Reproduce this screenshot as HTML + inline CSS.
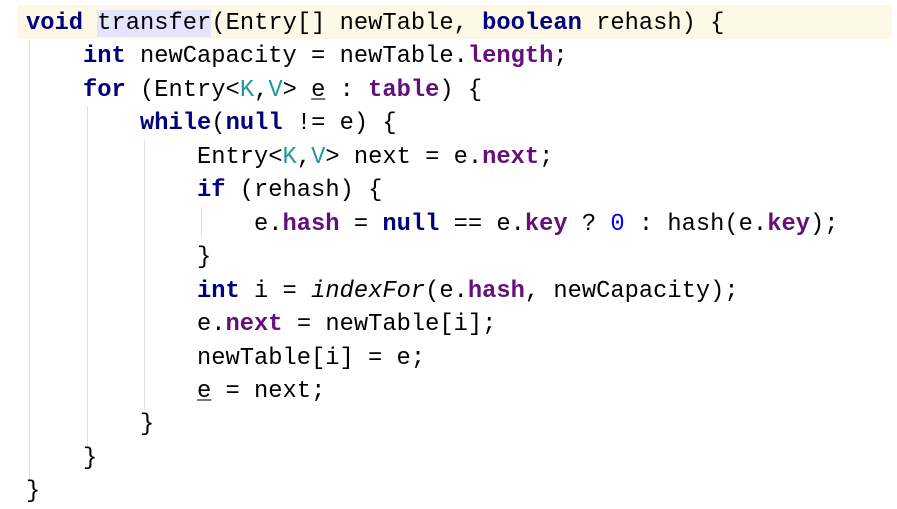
<!DOCTYPE html>
<html><head><style>
body{margin:0;background:#fff;width:897px;height:502px;overflow:hidden;position:relative}
.hl{position:absolute;left:18px;top:5px;width:874px;height:34px;background:#fcfae6}
.g{position:absolute;width:1px;background:#e0e0e0}
pre{position:absolute;left:26px;top:7px;margin:0;font-family:"Liberation Mono",monospace;font-size:23.75px;line-height:33.45px;color:#000}
.k{color:#000080;font-weight:bold}
.f{color:#660e7a;font-weight:bold}
.t{color:#20999d}
.n{color:#0000ff}
.s{background:#e4e4ff}
.u{text-decoration:underline;text-decoration-color:#777}
i{font-style:italic}
</style></head><body>
<div class="hl"></div>
<div class="g" style="left:29px;top:40px;height:440px"></div>
<div class="g" style="left:87px;top:106px;height:340px"></div>
<div class="g" style="left:144px;top:140px;height:270px"></div>
<div class="g" style="left:201px;top:207px;height:30px"></div>
<pre><span class="k">void</span> <span class="s">transfer</span>(Entry[] newTable, <span class="k">boolean</span> rehash) {
    <span class="k">int</span> newCapacity = newTable.<span class="f">length</span>;
    <span class="k">for</span> (Entry&lt;<span class="t">K</span>,<span class="t">V</span>&gt; <span class="u">e</span> : <span class="f">table</span>) {
        <span class="k">while</span>(<span class="k">null</span> != e) {
            Entry&lt;<span class="t">K</span>,<span class="t">V</span>&gt; next = e.<span class="f">next</span>;
            <span class="k">if</span> (rehash) {
                e.<span class="f">hash</span> = <span class="k">null</span> == e.<span class="f">key</span> ? <span class="n">0</span> : hash(e.<span class="f">key</span>);
            }
            <span class="k">int</span> i = <i>indexFor</i>(e.<span class="f">hash</span>, newCapacity);
            e.<span class="f">next</span> = newTable[i];
            newTable[i] = e;
            <span class="u">e</span> = next;
        }
    }
}</pre>
</body></html>
